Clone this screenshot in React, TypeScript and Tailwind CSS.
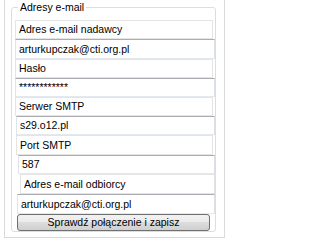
import React from "react";

const font = "font-['Liberation_Sans',Arial,sans-serif]";

function Label({ text, cls }: { text: string; cls: string }) {
  return (
    <div
      className={`flex items-center border border-[#e4e4e4] bg-white pl-[3px] leading-none ${cls}`}
    >
      {text}
    </div>
  );
}

function Field({ text, cls }: { text: string; cls: string }) {
  return (
    <div
      className={`flex items-center border-t border-t-[#abadb3] border-l border-l-[#e2e3ea] border-r border-r-[#dbdfe6] border-b border-b-[#e3e9ef] bg-white pl-[3px] leading-none ${cls}`}
    >
      {text}
    </div>
  );
}

export default function App() {
  return (
    <div className={`w-[229px] h-[243px] bg-white text-[10.5px] text-black ${font}`}>
      <div className="ml-[4px] w-[221px] h-[238px] border-x border-b border-[#dadada]">
        <fieldset className="ml-[6px] w-[205px] border border-[#d5dfe5] rounded-[3px] pt-[6px]">
          <legend className="ml-[6px] px-[2px] h-[14px] leading-[14px]">Adresy e-mail</legend>
          <Label text="Adres e-mail nadawcy" cls="ml-[3px] w-[198px] h-[19px]" />
          <Field text="arturkupczak@cti.org.pl" cls="ml-[3px] w-[200px] h-[20px]" />
          <Label text="Hasło" cls="ml-[3px] w-[198px] h-[19px]" />
          <Field text="************" cls="ml-[3px] w-[200px] h-[19px]" />
          <Label text="Serwer SMTP" cls="ml-[3px] w-[198px] h-[19px]" />
          <Field text="s29.o12.pl" cls="ml-[4px] w-[199px] h-[19px]" />
          <Label text="Port SMTP" cls="ml-[4px] w-[197px] h-[20px]" />
          <Field text="587" cls="ml-[6px] w-[197px] h-[19px]" />
          <Label text="Adres e-mail odbiorcy" cls="ml-[8px] w-[195px] h-[20px]" />
          <Field text="arturkupczak@cti.org.pl" cls="ml-[5px] w-[198px] h-[20px]" />
          <button className="ml-[5px] w-[193px] h-[17px] flex items-center justify-center rounded-[3px] border border-[#707070] bg-[linear-gradient(#f2f2f2_0%,#ebebeb_50%,#dddddd_50%,#cfcfcf_100%)] leading-none">
            Sprawdź połączenie i zapisz
          </button>
        </fieldset>
      </div>
    </div>
  );
}
